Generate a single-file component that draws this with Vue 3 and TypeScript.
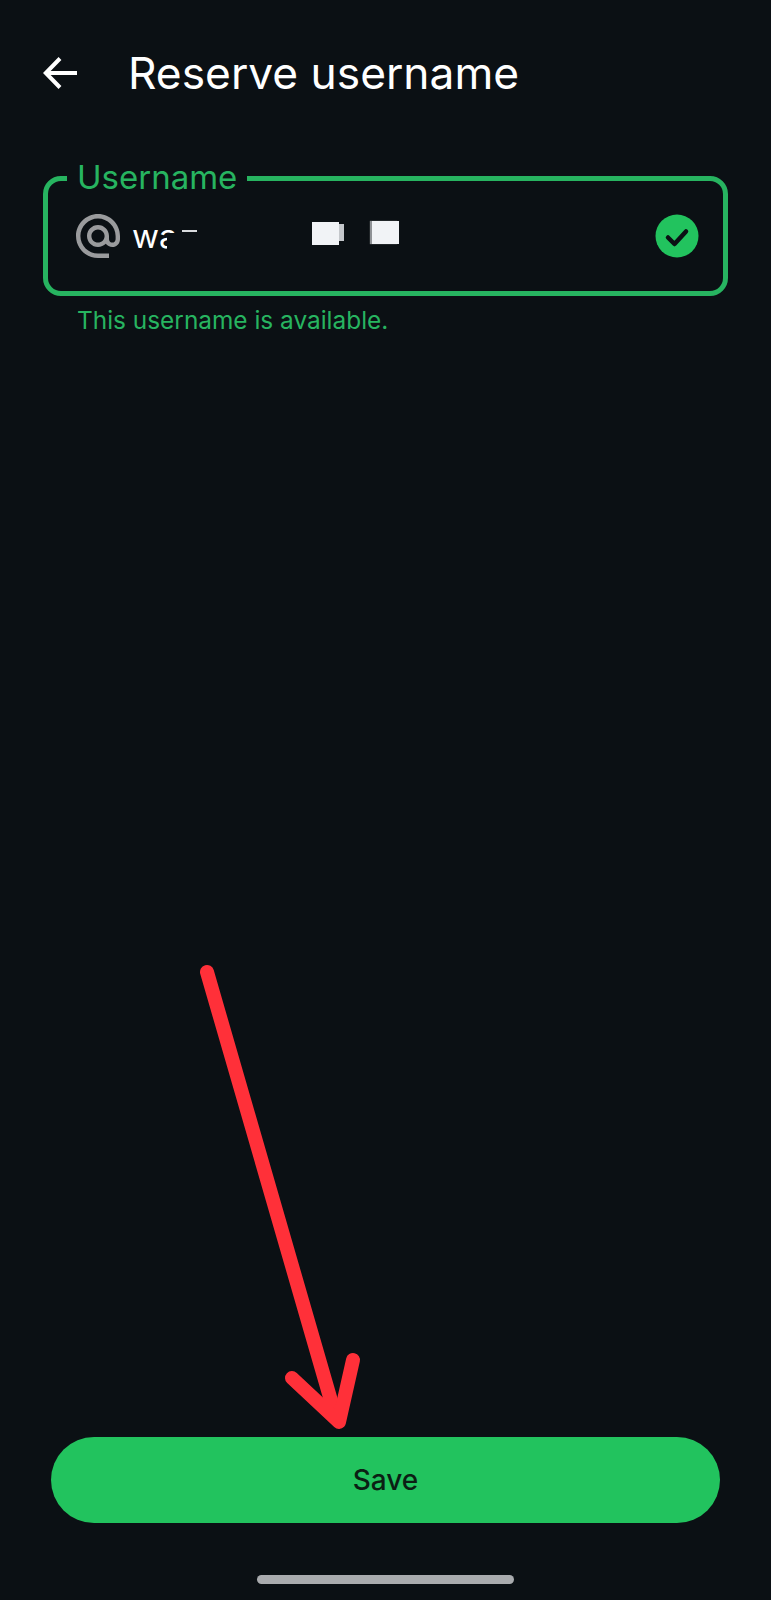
<script setup lang="ts">
const title: string = 'Reserve username'
</script>

<template>
  <div class="screen">
    <header class="topbar">
      <svg class="back" width="34" height="32" viewBox="0 0 34 32" fill="none" stroke="#fff" stroke-width="4">
        <path d="M34 16H3" />
        <path d="M17 1.5 2.8 16 17 30.5" />
      </svg>
      <h1 class="title">{{ title }}</h1>
    </header>

    <section class="field">
      <span class="legend">Username</span>
      <svg class="at" width="44" height="44" viewBox="2 1.95 20 20" fill="#9a9b9d">
        <path d="M12 1.95c-5.52 0-10 4.48-10 10s4.48 10 10 10h5v-2h-5c-4.34 0-8-3.66-8-8s3.66-8 8-8 8 3.66 8 8v1.43c0 .79-.71 1.57-1.5 1.57s-1.5-.78-1.5-1.57v-1.43c0-2.76-2.24-5-5-5s-5 2.24-5 5 2.24 5 5 5c1.38 0 2.64-.56 3.54-1.47.65.89 1.77 1.47 2.96 1.47 1.97 0 3.5-1.6 3.5-3.57v-1.43c0-5.52-4.48-10-10-10zm0 13c-1.66 0-3-1.34-3-3s1.34-3 3-3 3 1.34 3 3-1.34 3-3 3z" />
      </svg>
      <span class="value">wa<i class="smudge"></i><i class="dash"></i></span>
      <span class="block block-a"></span>
      <span class="block block-b"></span>
      <svg class="check" width="44" height="44" viewBox="0 0 44 44">
        <circle cx="22" cy="22" r="21.5" fill="#22c35e" />
        <path d="M13 23.5 19.5 30 31 17.5" fill="none" stroke="#0b1014" stroke-width="4.5" stroke-linecap="round" stroke-linejoin="round" />
      </svg>
    </section>
    <p class="helper">This username is available.</p>

    <div class="spacer"></div>

    <button class="save" type="button">Save</button>
    <div class="home"></div>

    <svg class="arrow" width="771" height="1600" viewBox="0 0 771 1600" fill="none" stroke="#ff3039" stroke-width="14" stroke-linecap="round" stroke-linejoin="round">
      <path d="M207 972 336 1418" />
      <path d="M292 1378 339 1422 353 1360" />
    </svg>
  </div>
</template>

<style scoped>
.screen {
  position: relative;
  width: 771px;
  height: 1600px;
  box-sizing: border-box;
  display: flex;
  flex-direction: column;
  background: #0b1014;
  font-family: Inter, Roboto, "Liberation Sans", sans-serif;
  overflow: hidden;
}
.topbar {
  display: flex;
  align-items: center;
  height: 48px;
  margin-top: 49px;
  padding-left: 43px;
  gap: 51px;
}
.back {
  flex: none;
}
.title {
  margin: 0;
  font-size: 44.3px;
  line-height: 48px;
  font-weight: 400;
  color: #fff;
  white-space: nowrap;
}
.field {
  position: relative;
  display: flex;
  align-items: center;
  box-sizing: border-box;
  height: 120px;
  margin: 79px 43px 0;
  padding: 0 24px 1px 28px;
  border: 5px solid #27b460;
  border-radius: 18px;
}
.legend {
  position: absolute;
  left: 19px;
  top: -23px;
  padding: 0 10px;
  background: #0b1014;
  color: #27b460;
  font-size: 33px;
  line-height: 38px;
}
.at {
  flex: none;
  margin-right: 12px;
}
.value {
  position: relative;
  width: 65px;
  color: #fff;
  font-size: 33px;
  line-height: 38px;
  margin-top: 1px;
}
.smudge {
  position: absolute;
  left: 35px;
  top: 16px;
  width: 30px;
  height: 22px;
  background: #0b1014;
}
.dash {
  position: absolute;
  left: 50px;
  top: 13px;
  width: 15px;
  height: 2px;
  background: #d9dbde;
}
.block {
  position: relative;
  height: 23px;
  background: #f1f3f6;
  filter: blur(0.5px);
}
.block-a {
  width: 27px;
  margin: 0 0 5px 115px;
}
.block-a::after {
  content: "";
  position: absolute;
  left: 100%;
  top: 2px;
  bottom: 4px;
  width: 5px;
  background: #c4c7cb;
}
.block-b {
  width: 27px;
  margin: 0 auto 7px 33px;
  box-shadow: -2px 0 1px #8f9296;
}
.helper {
  margin: 8px 0 0 77px;
  color: #27b460;
  font-size: 24.4px;
  line-height: 32px;
}
.spacer {
  flex: 1;
}
.save {
  display: block;
  height: 86px;
  margin: 0 51px;
  border: 0;
  border-radius: 43px;
  background: #22c35e;
  color: #0b1f14;
  font-family: inherit;
  font-size: 28px;
  font-weight: 500;
}
.home {
  width: 257px;
  height: 9px;
  margin: 52px auto 16px;
  border-radius: 5px;
  background: #a9abae;
}
.arrow {
  position: absolute;
  left: 0;
  top: 0;
  pointer-events: none;
}
</style>
